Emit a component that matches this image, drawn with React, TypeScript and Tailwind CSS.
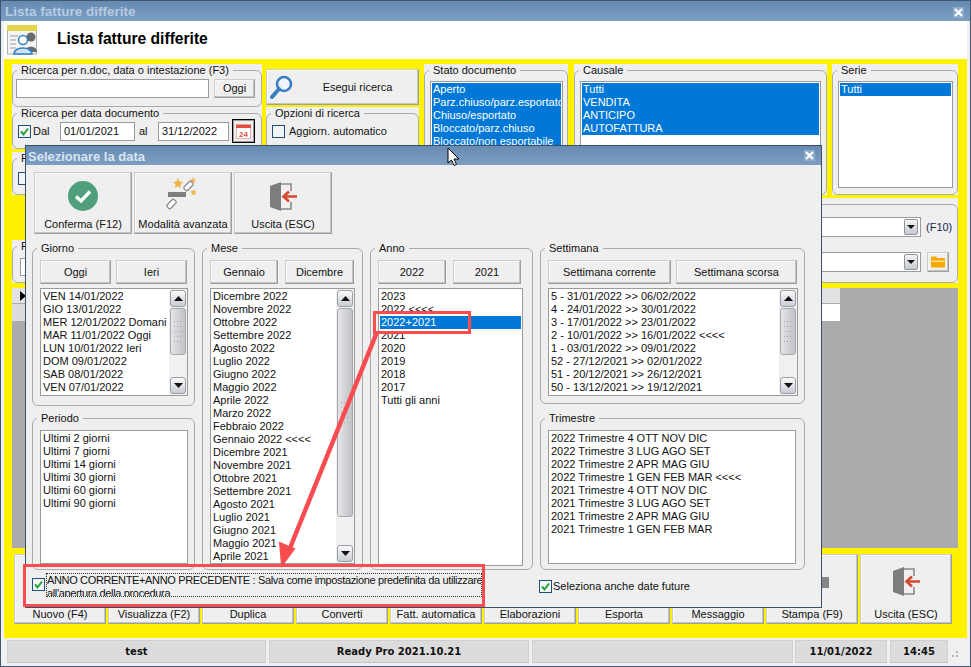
import type { ReactNode } from "react"
import clsx from "clsx"

const btn = "bg-[#efefef] border border-[#cdcdcd] border-r-[#9f9f9f] border-b-[#9f9f9f] shadow-[inset_-1px_-1px_0_#c4c4c4,inset_1px_1px_0_#f8f8f8]"

function Group({ title, className, children }: { title?: string; className?: string; children?: ReactNode }) {
    return (
        <div className={clsx("bg-[#efefef]", className)}>
            <fieldset className="h-full min-w-0 border border-[#ababab] rounded-[6px]">
                <legend className="ml-[4px] px-[4px] leading-[13px] whitespace-nowrap">{title ?? "\u00a0"}</legend>
                {children}
            </fieldset>
        </div>
    )
}

function Btn({ label, className }: { label: string; className?: string }) {
    return <div className={clsx(btn, "flex items-center justify-center whitespace-nowrap", className)}>{label}</div>
}

function Check({ on }: { on?: boolean }) {
    return (
        <div className="w-[13px] h-[13px] shrink-0 border border-[#1f4f7c] bg-[#f4f4f4] flex items-center justify-center">
            {on && (
                <svg width="11" height="11" viewBox="0 0 11 11">
                    <path d="M2 5.5 L4.5 8.5 L9 2.5" fill="none" stroke="#22a33a" strokeWidth="2" />
                </svg>
            )}
        </div>
    )
}

function ScrollArrow({ down }: { down?: boolean }) {
    return (
        <div className="h-[17px] w-[16px] shrink-0 rounded-[3px] border border-[#9a9fa8] bg-gradient-to-b from-[#fbfbfb] to-[#c9ccd3] flex items-center justify-center">
            <svg width="9" height="5" viewBox="0 0 9 5">
                <path d={down ? "M0 0H9L4.5 5Z" : "M0 5H9L4.5 0Z"} fill="#111" />
            </svg>
        </div>
    )
}

function Scrollbar({ thumb }: { thumb: number }) {
    return (
        <div className="w-[18px] shrink-0 bg-[#f0f0f0] flex flex-col py-[1px] pl-[1px]">
            <ScrollArrow />
            <div className="flex-1 min-h-0">
                <div
                    className="mt-[1px] w-[16px] rounded-[3px] border border-[#a5a8ae] bg-gradient-to-r from-[#e6e6e8] to-[#bfc1c6] flex items-center justify-center"
                    style={{ height: thumb }}
                >
                    <svg width="8" height="21" viewBox="0 0 8 21" fill="#a8a8a8">
                        {[0, 5, 10, 15, 20].map((y) => (
                            <g key={y}>
                                <rect x="0" y={y} width="1" height="1" />
                                <rect x="3" y={y} width="1" height="1" />
                                <rect x="6" y={y} width="1" height="1" />
                            </g>
                        ))}
                    </svg>
                </div>
            </div>
            <ScrollArrow down />
        </div>
    )
}

function ListBox({ items, selected = [], thumb, className }: { items: string[]; selected?: number[]; thumb?: number; className?: string }) {
    return (
        <div className={clsx("flex bg-white border border-[#9b9b9b] overflow-hidden", className)}>
            <div className="flex-1 min-w-0 p-[1px] pt-[1px] overflow-hidden">
                {items.map((t, i) => (
                    <div
                        key={t}
                        className={clsx(
                            "h-[13px] leading-[13px] pl-[1px] whitespace-nowrap overflow-hidden",
                            selected.includes(i) && "bg-[#0078d7] text-white"
                        )}
                    >
                        {t}
                    </div>
                ))}
            </div>
            {thumb !== undefined && <Scrollbar thumb={thumb} />}
        </div>
    )
}

function DoorIcon() {
    return (
        <svg width="29" height="31" viewBox="0 0 29 31">
            <path d="M12 3H22V10M22 21V28H12" fill="none" stroke="#8a8a8a" strokeWidth="1.6" />
            <path d="M1 5L12 1V30L1 26Z" fill="#7d7d7d" />
            <path d="M28 15.5H15M20 10.5L14.5 15.5L20 20.5" fill="none" stroke="#d4492f" strokeWidth="2.6" />
        </svg>
    )
}

function WandIcon() {
    return (
        <svg width="34" height="38" viewBox="0 0 34 38">
            <path d="M12 2l1.5 3.5 3.5.5-2.5 2.5.6 3.5-3.1-1.7-3.1 1.7.6-3.5L7 6l3.5-.5z" fill="#efb54a" />
            <path d="M27 1l1 2.2 2.2.3-1.6 1.5.4 2.2-2-1-2 1 .4-2.2-1.6-1.5 2.2-.3z" fill="#efb54a" />
            <path d="M27.5 13l1 2.2 2.2.3-1.6 1.5.4 2.2-2-1-2 1 .4-2.2-1.6-1.5 2.2-.3z" fill="#efb54a" />
            <rect x="2" y="16" width="18" height="5" fill="#7f7f7f" />
            <rect x="20" y="5" width="5" height="10" rx="1.5" transform="rotate(45 22.5 10)" fill="#fff" stroke="#8a8a8a" strokeWidth="1.2" />
            <rect x="3" y="23" width="5" height="10" rx="1.5" transform="rotate(45 5.5 28)" fill="#fff" stroke="#8a8a8a" strokeWidth="1.2" />
        </svg>
    )
}

function CloseBox({ className }: { className?: string }) {
    return (
        <div className={clsx("w-[11px] h-[11px] bg-[#8eabcb] flex items-center justify-center", className)}>
            <svg width="9" height="9" viewBox="0 0 9 9">
                <path d="M1 1L8 8M8 1L1 8" stroke="#fff" strokeWidth="2.2" />
            </svg>
        </div>
    )
}

const giorni = ["VEN 14/01/2022", "GIO 13/01/2022", "MER 12/01/2022 Domani", "MAR 11/01/2022 Oggi", "LUN 10/01/2022 Ieri", "DOM 09/01/2022", "SAB 08/01/2022", "VEN 07/01/2022"]
const periodi = ["Ultimi 2 giorni", "Ultimi 7 giorni", "Ultimi 14 giorni", "Ultimi 30 giorni", "Ultimi 60 giorni", "Ultimi 90 giorni"]
const mesi = ["Dicembre 2022", "Novembre 2022", "Ottobre 2022", "Settembre 2022", "Agosto 2022", "Luglio 2022", "Giugno 2022", "Maggio 2022", "Aprile 2022", "Marzo 2022", "Febbraio 2022", "Gennaio 2022 <<<<", "Dicembre 2021", "Novembre 2021", "Ottobre 2021", "Settembre 2021", "Agosto 2021", "Luglio 2021", "Giugno 2021", "Maggio 2021", "Aprile 2021"]
const anni = ["2023", "2022 <<<<", "2022+2021", "2021", "2020", "2019", "2018", "2017", "Tutti gli anni"]
const settimane = ["5 - 31/01/2022 >> 06/02/2022", "4 - 24/01/2022 >> 30/01/2022", "3 - 17/01/2022 >> 23/01/2022", "2 - 10/01/2022 >> 16/01/2022 <<<<", "1 - 03/01/2022 >> 09/01/2022", "52 - 27/12/2021 >> 02/01/2022", "51 - 20/12/2021 >> 26/12/2021", "50 - 13/12/2021 >> 19/12/2021"]
const trimestri = ["2022 Trimestre 4 OTT NOV DIC", "2022 Trimestre 3 LUG AGO SET", "2022 Trimestre 2 APR MAG GIU", "2022 Trimestre 1 GEN FEB MAR <<<<", "2021 Trimestre 4 OTT NOV DIC", "2021 Trimestre 3 LUG AGO SET", "2021 Trimestre 2 APR MAG GIU", "2021 Trimestre 1 GEN FEB MAR"]
const stati = ["Aperto", "Parz.chiuso/parz.esportato", "Chiuso/esportato", "Bloccato/parz.chiuso", "Bloccato/non esportabile"]
const causali = ["Tutti", "VENDITA", "ANTICIPO", "AUTOFATTURA"]
const bottoni = ["Nuovo (F4)", "Visualizza (F2)", "Duplica", "Converti", "Fatt. automatica", "Elaborazioni", "Esporta", "Messaggio", "Stampa (F9)", "Uscita (ESC)"]

function SearchPanels() {
    return (
        <div className="flex h-[131px]">
            <div className="w-[250px] flex flex-col">
                <Group title="Ricerca per n.doc, data o intestazione (F3)" className="h-[43px]">
                    <div className="flex gap-[5px] pl-[3px] pr-[5px] pt-[2px]">
                        <div className="w-[193px] h-[19px] bg-white border border-[#9b9b9b]" />
                        <Btn label="Oggi" className="w-[41px] h-[19px]" />
                    </div>
                </Group>
                <Group title="Ricerca per data documento" className="h-[42px]">
                    <div className="flex items-center pl-[5px]">
                        <Check on />
                        <span className="ml-[2px] w-[27px]">Dal</span>
                        <div className="w-[75px] h-[19px] bg-white border border-[#9b9b9b] pl-[3px] leading-[17px]">01/01/2021</div>
                        <span className="ml-[4px] w-[19px]">al</span>
                        <div className="w-[71px] h-[19px] bg-white border border-[#9b9b9b] pl-[3px] leading-[17px]">31/12/2022</div>
                        <div className="ml-[3px] w-[23px] h-[24px] -mt-[1px] border border-black bg-[#efefef] flex items-center justify-center shadow-[inset_0_0_0_1px_#9b9b9b]">
                            <svg width="17" height="17" viewBox="0 0 17 17">
                                <rect x="1.5" y="2.5" width="14" height="13" fill="#fff" stroke="#e7b0a8" />
                                <path d="M1 1.5H16V5H1Z" fill="#e0503c" />
                                <text x="8.5" y="14" fontSize="8" fontWeight="bold" textAnchor="middle" fill="#e0503c" fontFamily="'Liberation Sans', sans-serif">24</text>
                            </svg>
                        </div>
                    </div>
                </Group>
                <Group title="R" className="h-[43px] mt-[3px]">
                    <div className="pl-[5px] pt-[7px]">
                        <Check />
                    </div>
                </Group>
            </div>
            <div className="w-[153px] ml-[4px] flex flex-col">
                <div className={clsx(btn, "h-[36px] mt-[5px] flex items-center pl-[3px] shrink-0")}>
                    <svg width="23" height="25" viewBox="0 0 23 25">
                        <circle cx="14" cy="9" r="7" fill="#eef4fa" stroke="#3b7fc0" strokeWidth="2.6" />
                        <path d="M9 14L2 22" stroke="#3b7fc0" strokeWidth="4" strokeLinecap="round" />
                    </svg>
                    <span className="flex-1 text-center pl-[4px]">Esegui ricerca</span>
                </div>
                <Group title="Opzioni di ricerca" className="flex-1 mt-[2px]">
                    <div className="flex items-center gap-[4px] pl-[5px] pt-[3px]">
                        <Check />
                        <span>Aggiorn. automatico</span>
                    </div>
                </Group>
            </div>
            <Group title="Stato documento" className="w-[144px] ml-[5px]">
                <div className="pl-[5px] pr-[4px] pt-[4px]">
                    <ListBox items={stati} selected={[0, 1, 2, 3, 4]} className="h-[107px]" />
                </div>
            </Group>
            <Group title="Causale" className="w-[253px] ml-[6px]">
                <div className="pl-[5px] pr-[5px] pt-[4px]">
                    <ListBox items={causali} selected={[0, 1, 2, 3]} className="h-[107px]" />
                </div>
            </Group>
            <Group title="Serie" className="w-[126px] ml-[5px]">
                <div className="pl-[5px] pr-[4px] pt-[4px]">
                    <ListBox items={["Tutti"]} selected={[0]} className="h-[107px]" />
                </div>
            </Group>
        </div>
    )
}

function Combo({ className }: { className?: string }) {
    return (
        <div className={clsx("flex-1 h-[20px] bg-white border border-[#9b9b9b] flex justify-end items-center pr-[2px]", className)}>
            <div className="w-[14px] h-[16px] rounded-[2px] border border-[#8f949c] bg-gradient-to-b from-[#f6f6f6] to-[#c6c9d0] flex items-center justify-center">
                <svg width="8" height="4" viewBox="0 0 8 4">
                    <path d="M0 0H8L4 4Z" fill="#111" />
                </svg>
            </div>
        </div>
    )
}

function FilterRow() {
    return (
        <div className="flex h-[85px] mt-[3px]">
            <div className="w-[400px] flex flex-col justify-end">
                <Group title="R" className="h-[43px]">
                    <div className="pl-[7px] pt-[5px]">
                        <div className="w-[200px] h-[18px] border border-[#9b9b9b] bg-white" />
                    </div>
                </Group>
            </div>
            <Group className="flex-1 ml-[12px]">
                <div className="flex flex-col gap-[15px] pt-[6px] pr-[3px] pl-[8px]">
                    <div className="flex items-center">
                        <Combo />
                        <span className="ml-[5px] w-[28px] text-[#1a2a55]">(F10)</span>
                    </div>
                    <div className="flex items-center">
                        <Combo />
                        <div className={clsx(btn, "ml-[6px] mr-[5px] w-[22px] h-[20px] flex items-center justify-center")}>
                            <svg width="16" height="12" viewBox="0 0 16 12">
                                <path d="M1 2C1 1 1.5.5 2.5.5H6L7.5 2H13.5C14.5 2 15 2.5 15 3.5V10C15 11 14.5 11.5 13.5 11.5H2.5C1.5 11.5 1 11 1 10Z" fill="#f6a800" />
                                <path d="M1.5 4.5H14.5V6H1.5Z" fill="#ffe08a" />
                            </svg>
                        </div>
                    </div>
                </div>
            </Group>
        </div>
    )
}

function DataGrid() {
    return (
        <div className="h-[260px] mt-[5px] bg-[#ababab] flex flex-col items-start">
            <div className="w-[828px] h-[15px] bg-[#e2e2e2] pl-[8px] flex items-center">
                <svg width="6" height="10" viewBox="0 0 6 10">
                    <path d="M0 0L6 5L0 10Z" fill="#000" />
                </svg>
            </div>
            <div className="w-[828px] h-[17px] mt-[1px] flex">
                <div className="w-[13px] bg-[#dcdcdc]" />
                <div className="flex-1 bg-white" />
            </div>
        </div>
    )
}

function BottomButtons() {
    return (
        <div className="flex gap-[2px] h-[70px] mt-[6px] pl-[2px]">
            {bottoni.map((b, i) => (
                <div key={b} className={clsx(btn, "w-[92px] flex flex-col items-center justify-end pb-[1px]")}>
                    {i === 8 && (
                        <svg width="34" height="19" viewBox="0 0 34 19" className="mb-[17px]">
                            <path d="M8 0H26V6H8Z" fill="#4a90d9" />
                            <path d="M0 6H34V17H0Z" fill="#858585" />
                        </svg>
                    )}
                    {i === 9 && (
                        <div className="mb-[10px]">
                            <DoorIcon />
                        </div>
                    )}
                    <span className="leading-[15px]">{b}</span>
                </div>
            ))}
        </div>
    )
}

function StatusBar() {
    const cell = "h-[23px] bg-[#dcdcdc] border border-[#d0d0d0] border-b-[#c4c4c4] flex items-center justify-center font-bold font-['DejaVu_Sans',sans-serif] text-[10px] text-[#111]"
    return (
        <div className="h-[27px] flex items-start gap-[3px] px-[3px] pt-[2px] bg-[#f0f0f0] relative">
            <div className={clsx(cell, "w-[259px]")}>test</div>
            <div className={clsx(cell, "w-[260px]")}>Ready Pro 2021.10.21</div>
            <div className={clsx(cell, "w-[261px] -mr-[1px]")} />
            <div className={clsx(cell, "w-[92px]")}>11/01/2022</div>
            <div className={clsx(cell, "w-[58px]")}>14:45</div>
            <svg width="8" height="8" viewBox="0 0 8 8" fill="#b5b5b5" className="mt-[11px]">
                <rect x="5" y="0" width="2" height="2" />
                <rect x="1" y="4" width="2" height="2" />
                <rect x="5" y="4" width="2" height="2" />
            </svg>
        </div>
    )
}

function DateDialog() {
    return (
        <div className="absolute left-[24px] top-[144px] w-[797px] h-[463px] border border-[#3c4f64] bg-[#efefef] flex flex-col">
            <div className="h-[19px] shrink-0 bg-gradient-to-b from-[#688bb2] to-[#7d9ec2] flex items-center justify-between pl-[2px] pr-[6px]">
                <span className="pt-[2px] font-['Liberation_Sans',sans-serif] font-bold text-[13px] text-[#d8e5f2]">Selezionare la data</span>
                <CloseBox />
            </div>
            <div className="flex gap-[2px] pl-[8px] pt-[7px] shrink-0">
                <div className={clsx(btn, "w-[98px] h-[62px] flex flex-col items-center justify-between pt-[3px] pb-[1px]")}>
                    <svg width="32" height="32" viewBox="0 0 32 32" className="mt-[4px]">
                        <circle cx="16" cy="16" r="15" fill="#4f9f7b" />
                        <path d="M9 16.5L14 21L23 11.5" fill="none" stroke="#fff" strokeWidth="3.4" />
                    </svg>
                    <span className="leading-[15px]">Conferma (F12)</span>
                </div>
                <div className={clsx(btn, "w-[98px] h-[62px] flex flex-col items-center justify-between pt-[3px] pb-[1px]")}>
                    <WandIcon />
                    <span className="leading-[15px]">Modalità avanzata</span>
                </div>
                <div className={clsx(btn, "w-[98px] h-[62px] flex flex-col items-center justify-between pt-[3px] pb-[1px]")}>
                    <div className="mt-[5px]">
                        <DoorIcon />
                    </div>
                    <span className="leading-[15px]">Uscita (ESC)</span>
                </div>
            </div>
            <div className="flex gap-[7px] pl-[6px] pt-[8px] h-[336px] shrink-0">
                <div className="w-[163px] flex flex-col gap-[6px]">
                    <Group title="Giorno" className="h-[164px]">
                        <div className="pl-[7px] pr-[6px] pt-[5px]">
                            <div className="flex gap-[5px] h-[24px]">
                                <Btn label="Oggi" className="w-[71px]" />
                                <Btn label="Ieri" className="w-[71px]" />
                            </div>
                            <ListBox items={giorni} thumb={47} className="h-[108px] mt-[4px]" />
                        </div>
                    </Group>
                    <Group title="Periodo" className="flex-1">
                        <div className="pl-[7px] pr-[6px] pt-[5px]">
                            <ListBox items={periodi} className="h-[134px]" />
                        </div>
                    </Group>
                </div>
                <Group title="Mese" className="w-[161px]">
                    <div className="pl-[7px] pr-[7px] pt-[5px]">
                        <div className="flex gap-[7px] h-[24px]">
                            <Btn label="Gennaio" className="w-[68px]" />
                            <Btn label="Dicembre" className="w-[69px]" />
                        </div>
                        <ListBox items={mesi} thumb={209} className="h-[276px] mt-[4px]" />
                    </div>
                </Group>
                <Group title="Anno" className="w-[163px]">
                    <div className="pl-[7px] pr-[9px] pt-[5px]">
                        <div className="flex gap-[7px] h-[24px]">
                            <Btn label="2022" className="w-[68px]" />
                            <Btn label="2021" className="w-[68px]" />
                        </div>
                        <ListBox items={anni} selected={[2]} className="h-[278px] mt-[4px]" />
                    </div>
                </Group>
                <div className="w-[265px] flex flex-col gap-[8px]">
                    <Group title="Settimana" className="h-[162px]">
                        <div className="pl-[7px] pr-[6px] pt-[5px]">
                            <div className="flex gap-[5px] h-[24px]">
                                <Btn label="Settimana corrente" className="w-[123px]" />
                                <Btn label="Settimana scorsa" className="w-[121px]" />
                            </div>
                            <ListBox items={settimane} thumb={47} className="h-[108px] mt-[4px]" />
                        </div>
                    </Group>
                    <Group title="Trimestre" className="flex-1">
                        <div className="pl-[7px] pr-[8px] pt-[5px]">
                            <ListBox items={trimestri} className="h-[134px]" />
                        </div>
                    </Group>
                </div>
            </div>
            <div className="flex pl-[6px] pt-[3px]">
                <div className="w-[455px] flex gap-[2px] items-start">
                    <div className="mt-[5px]">
                        <Check on />
                    </div>
                    <div className="w-[436px] h-[24px] overflow-hidden whitespace-nowrap tracking-[-0.35px] border border-dotted border-[#333] leading-[13px] -ml-[1px]">
                        ANNO CORRENTE+ANNO PRECEDENTE : Salva come impostazione predefinita da utilizzare
                        <br />
                        all'apertura della procedura
                    </div>
                </div>
                <div className="ml-[52px] flex items-center gap-[1px] h-[24px] mt-[1px]">
                    <Check on />
                    <span>Seleziona anche date future</span>
                </div>
            </div>
        </div>
    )
}

export default function App() {
    return (
        <div className="relative w-[971px] h-[667px] overflow-hidden border border-[#3f5570] bg-[#f0f0f0] flex flex-col font-['Liberation_Sans',sans-serif] text-[11px] text-[#111]">
            <div className="h-[20px] pt-[2px] shrink-0 bg-gradient-to-b from-[#678ab1] to-[#7d9ec3] flex items-center justify-between pl-[4px] pr-[6px]">
                <span className="pt-[1px] font-bold text-[13.5px] text-[#b6cbe2]">Lista fatture differite</span>
                <CloseBox />
            </div>
            <div className="flex-1 flex flex-col px-[3px] min-h-0">
                <div className="h-[38px] shrink-0 bg-white flex items-center pl-[3px]">
                    <svg width="30" height="30" viewBox="0 0 30 30">
                        <rect x="0.5" y="0" width="29" height="29" fill="#f4f4f4" stroke="#b0b0b0" />
                        <rect x="0" y="0" width="30" height="6" fill="#e4d54a" />
                        <path d="M3 11H11M3 15H9M3 19H9M3 23H9" stroke="#b8b8b8" strokeWidth="1.4" />
                        <circle cx="24" cy="12" r="4.5" fill="#6a6a6a" />
                        <path d="M18 27C18 20 30 20 30 27Z" fill="#6a6a6a" />
                        <circle cx="16" cy="15" r="4.5" fill="#fff" stroke="#2f7fc4" strokeWidth="1.5" />
                        <path d="M7 29C7 21 25 21 25 29Z" fill="#cfe3f5" stroke="#2f7fc4" strokeWidth="1.5" />
                    </svg>
                    <span className="ml-[20px] -mt-[2px] font-bold text-[15.6px] text-black">Lista fatture differite</span>
                </div>
                <div className="h-[579px] shrink-0 bg-[#fff200] pl-[8px] pr-[9px] pt-[5px]">
                    <SearchPanels />
                    <FilterRow />
                    <DataGrid />
                    <BottomButtons />
                </div>
                <StatusBar />
            </div>

            <DateDialog />

            {/* annotazioni rosse sopra il dialogo */}
            <div className="absolute left-[372px] top-[310px] w-[98px] h-[23px] border-[3px] border-[#f94c50]" />
            <div className="absolute left-[22px] top-[563px] w-[462px] h-[43px] border-[3px] border-[#f94c50]" />
            <svg width="971" height="667" className="absolute left-0 top-0 pointer-events-none">
                <path d="M376 331L287 552" stroke="#f94c50" strokeWidth="4.5" fill="none" />
                <path d="M281 564L279 542L293 548Z" fill="#f94c50" stroke="#f94c50" strokeWidth="2" />
                <path d="M447 147V162L450.5 159L453 164.5L455.5 163.5L453 158H458Z" fill="#fff" stroke="#000" strokeWidth="1" />
            </svg>
        </div>
    )
}
